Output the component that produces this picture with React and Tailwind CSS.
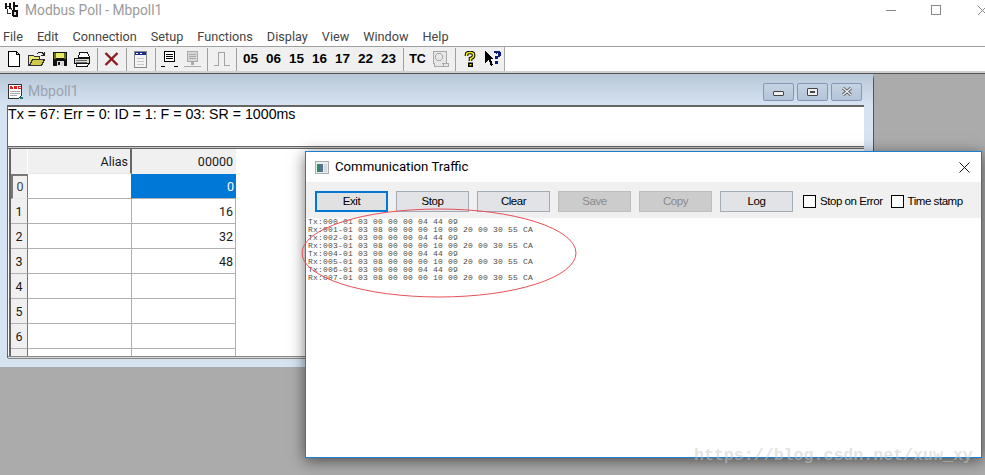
const UI = "font-['Roboto',sans-serif]";
const MENUS = ["File", "Edit", "Connection", "Setup", "Functions", "Display", "View", "Window", "Help"];
const CODES = ["05", "06", "15", "16", "17", "22", "23"];
const REQUEST = "01 03 00 00 00 04 44 09";
const REPLY = "01 03 08 00 00 00 10 00 20 00 30 55 CA";
const LOG = Array.from({ length: 8 }, (_, i) => {
  const seq = String(i).padStart(3, "0");
  return i % 2 === 0 ? `Tx:${seq}-${REQUEST}` : `Rx:${seq}-${REPLY}`;
});
const ROWS = [
  { id: 0, value: "0" },
  { id: 1, value: "16" },
  { id: 2, value: "32" },
  { id: 3, value: "48" },
  { id: 4, value: "" },
  { id: 5, value: "" },
  { id: 6, value: "" },
];

function AppIcon() {
  return (
    <svg width="16" height="16" viewBox="0 0 16 16" shapeRendering="crispEdges">
      <path d="M1 1h2v3h2V1h2v6H5V5H3v2H1z" fill="#111" />
      <path d="M9 0h2v3h3v2h-3v3H9z" fill="#111" />
      <path d="M3 7h1v4h3v1H3zM7 6h1v2H7z" fill="#333" />
      <path d="M8 8h6v6l-1 1H9l-1-1z" fill="#111" />
      <path d="M10 10h2v3h-2z" fill="#ddd" />
    </svg>
  );
}

function NewIcon() {
  return (
    <svg width="14" height="16" viewBox="0 0 14 16" shapeRendering="crispEdges">
      <path d="M1.500.5h8l3 3v12h-11z" fill="#fff" stroke="#000" />
      <path d="M9.500.5v3h3" fill="none" stroke="#000" />
    </svg>
  );
}

function OpenIcon() {
  return (
    <svg width="17" height="14" viewBox="0 0 17 14" shapeRendering="crispEdges">
      <path d="M.5 3.500h5l1 1h5v3h-7l-3 6h-1z" fill="#e9e96a" stroke="#333" />
      <path d="M4.500 7.500h12l-3 6h-12z" fill="#cfc84a" stroke="#333" />
      <path d="M9 2l2-1.500h3l2 2M16 0v3h-3" fill="none" stroke="#222" />
    </svg>
  );
}

function SaveIcon() {
  return (
    <svg width="14" height="14" viewBox="0 0 14 14" shapeRendering="crispEdges">
      <path d="M0 0h14v14H0z" fill="#111" />
      <path d="M3 1h8v5H3z" fill="#e8e86a" />
      <path d="M1 1h2v6h8V1h2v6H1z" fill="#6d6d1c" />
      <path d="M4 9h7v5H4z" fill="#ddd" />
      <path d="M5 10h2v3H5z" fill="#111" />
    </svg>
  );
}

function PrintIcon() {
  return (
    <svg width="17" height="15" viewBox="0 0 17 15" shapeRendering="crispEdges">
      <path d="M5.500.5h8l2 5h-11z" fill="#fff" stroke="#111" />
      <path d="M.5 6.500h15v5h-15z" fill="#d8d8d8" stroke="#111" />
      <path d="M2.500 11.500h12l-1 3h-11z" fill="#fff" stroke="#111" />
      <path d="M2 8h11M2 10h11" stroke="#666" />
      <path d="M14 8h1v1h-1z" fill="#e8e86a" />
    </svg>
  );
}

function CloseRedIcon() {
  return (
    <svg width="15" height="14" viewBox="0 0 15 14">
      <path d="M1.500 1l12 12M13.500 1l-12 12" stroke="#8c1d1d" strokeWidth="2.400" fill="none" />
    </svg>
  );
}

function WindowIcon() {
  return (
    <svg width="13" height="17" viewBox="0 0 13 17" shapeRendering="crispEdges">
      <path d="M.5.5h12v16H.5z" fill="#f4f4f4" stroke="#8a8a8a" />
      <path d="M1 1h11v3H1z" fill="#1c2f8c" />
      <path d="M2 2h2v1H2zM6 2h2v1H6z" fill="#fff" />
      <path d="M3 7h7M3 10h7M3 13h7" stroke="#c8c8c8" />
    </svg>
  );
}

function BusIcon({ muted = false }) {
  const c = muted ? "#a9a9a9" : "#000";
  return (
    <svg width="17" height="17" viewBox="0 0 17 17" shapeRendering="crispEdges">
      <path d="M3.500.5h10v10h-10z" fill={muted ? "#d8d8d8" : "#fff"} stroke={c} />
      <path d="M5 3h7M5 5h7M5 7h7" stroke={c} />
      <path d="M7 11h3v3H7z" fill={muted ? c : "none"} />
      <path d="M0 15.500h4M13 15.500h4" stroke={c} />
      {muted && <path d="M4 15.500h9" stroke={c} />}
    </svg>
  );
}

function PulseIcon() {
  return (
    <svg width="16" height="14" viewBox="0 0 16 14" shapeRendering="crispEdges">
      <path d="M0 13.500h4.500V.5h6v13H16" fill="none" stroke="#a3a3a3" />
    </svg>
  );
}

function ScopeIcon() {
  return (
    <svg width="17" height="16" viewBox="0 0 17 16" shapeRendering="crispEdges">
      <path d="M1.500.5h13v12h-3v3h-9v-3h-1z" fill="#e6e6e6" stroke="#a8a8a8" />
      <circle cx="7" cy="6" r="3.500" fill="none" stroke="#a8a8a8" />
      <path d="M11 12.500h5.500v3h-5z" fill="#e6e6e6" stroke="#a8a8a8" />
    </svg>
  );
}

function QuestionIcon() {
  return (
    <svg width="12" height="16" viewBox="0 0 12 16">
      <path d="M2.500 5V3.500Q2.500 1.500 6 1.500T9.500 3.500V5Q9.500 6.500 6.500 7.500V10" fill="none" stroke="#000" strokeWidth="3.600" />
      <path d="M2.500 5V3.500Q2.500 1.500 6 1.500T9.500 3.500V5Q9.500 6.500 6.500 7.500V10" fill="none" stroke="#f5ef1a" strokeWidth="1.600" />
      <path d="M4 11.500h5v4.500H4z" fill="#000" />
      <path d="M5.500 13h2v1.500h-2z" fill="#f5ef1a" />
    </svg>
  );
}

function HelpArrowIcon() {
  return (
    <svg width="16" height="16" viewBox="0 0 16 16" shapeRendering="crispEdges">
      <path d="M0 0l9 8H6l2 6-2 1-2-6-4 3z" fill="#000" />
      <path d="M9 2V0h6v1h1v4h-1v1h-2v2h-3V5h3V2h-1v1z" fill="#0c1a80" />
      <path d="M10 10h3v3h-3z" fill="#0c1a80" />
    </svg>
  );
}

function DocIcon() {
  return (
    <svg width="16" height="16" viewBox="0 0 16 16" shapeRendering="crispEdges">
      <path d="M.5.5h13v11l-3 3H.5z" fill="#fff" stroke="#333" />
      <path d="M2 2h10v4H2z" fill="#fff" />
      <path d="M2 2h2v1h1v2H2zM6 2h3v3H6zM10 2h3v1h-2v1h2v1h-3z" fill="#d22" />
      <path d="M2 7h10M2 9h10M2 11h7" stroke="#aaa" />
      <path d="M12 13h3v2h-3z" fill="#16807f" />
    </svg>
  );
}

function TrafficIcon() {
  return (
    <svg width="14" height="13" viewBox="0 0 14 13" shapeRendering="crispEdges">
      <path d="M0 0h14v13H0z" fill="#a9adb0" />
      <path d="M1 1h12v11H1z" fill="#e9eef0" />
      <path d="M2 3h3v8H2z" fill="#2f8a63" />
      <path d="M5 3h3v8H5z" fill="#57738f" />
      <path d="M9 3h3v8H9z" fill="#d3dde0" />
    </svg>
  );
}

function ToolSep() {
  return (
    <div className="w-[6px] h-[23px] flex justify-center shrink-0">
      <div className="w-px h-full bg-[#a0a0a0]" />
    </div>
  );
}

function ToolBtn({ children }) {
  return <div className="w-[23px] h-[23px] shrink-0 flex items-center justify-center">{children}</div>;
}

function MdiBtn({ children }) {
  return (
    <div className="w-[31px] h-[18px] rounded-[2px] border border-[#8497b3] bg-gradient-to-b from-[#c6d3e2] to-[#b3c4d8] flex items-center justify-center">
      {children}
    </div>
  );
}

function TrafficBtn({ label, focused = false, disabled = false }) {
  let tone = "border border-[#a3acb5] bg-[#e1e3e6] text-black";
  if (focused) tone = "border-2 border-[#0078d7] bg-[#e1e1e1] text-black";
  if (disabled) tone = "border border-[#bdbdbd] bg-[#cccccc] text-[#8a8a8a]";
  return (
    <div className={`w-[73px] h-[21px] shrink-0 flex items-center justify-center pt-px ${tone}`}>
      {label}
    </div>
  );
}

function ChildWindow() {
  return (
    <div className="absolute left-0 top-0 w-[874px] h-[293px] rounded-tr-[5px] border-r border-[#555] bg-[#d6e4f2] flex flex-col">
      <div className={`h-[31px] shrink-0 flex items-center pt-[4px] pl-[8px] pr-[11px] bg-gradient-to-b from-[#b9c8d8] to-[#d5e3f2] ${UI}`}>
        <DocIcon />
        <span className="ml-[4px] text-[14px] text-[#9aa3ad]">Mbpoll1</span>
        <div className="ml-auto flex gap-[3px]">
          <MdiBtn>
            <div className="w-[11px] h-[5px] mt-[3px] border border-[#444] bg-[#eee] rounded-[1px]" />
          </MdiBtn>
          <MdiBtn>
            <div className="w-[11px] h-[8px] border border-[#444] bg-[#eee] flex items-center justify-center rounded-[1px]">
              <div className="w-[5px] h-[2px] bg-[#444]" />
            </div>
          </MdiBtn>
          <MdiBtn>
            <svg width="12" height="9" viewBox="0 0 12 9">
              <path d="M2 1l8 7M10 1L2 8" stroke="#555" strokeWidth="3" />
              <path d="M2 1l8 7M10 1L2 8" stroke="#eee" strokeWidth="1.400" />
            </svg>
          </MdiBtn>
        </div>
      </div>
      <div className="ml-[7px] mr-[9px] h-[253px] shrink-0 border-t-2 border-l border-[#666] bg-white flex flex-col">
        <div className="h-[39px] shrink-0 text-[14.2px] leading-[14px] text-black font-['Liberation_Sans',sans-serif]">
          Tx = 67: Err = 0: ID = 1: F = 03: SR = 1000ms
        </div>
        <div className="h-[3px] shrink-0 border-y border-[#666] bg-[#c8c8c8]" />
        <Grid />
        <div className="h-[3px] mt-auto shrink-0 border-y border-[#888] bg-[#d8d8d8]" />
      </div>
    </div>
  );
}

function Grid() {
  return (
    <div className={`ml-px w-[227px] h-[207px] shrink-0 border-l-2 border-[#666] overflow-hidden text-[12.5px] leading-[26px] text-[#1a1a1a] ${UI}`}>
      <div className="flex h-[25px]">
        <div className="w-[17px] shrink-0 bg-[#f0f0f0] border-r border-white" />
        <div className="w-[104px] shrink-0 bg-[#f0f0f0] border-r-2 border-[#666] border-b border-b-[#e8e8e8] text-right pr-[2px]">Alias</div>
        <div className="w-[104px] shrink-0 bg-[#f0f0f0] text-right pr-[3px]">00000</div>
      </div>
      {ROWS.map((row) => (
        <div key={row.id} className="flex h-[25px]">
          <div className={`w-[17px] shrink-0 bg-[#f0f0f0] border-r border-[#777] border-b text-center ${row.id === 0 ? "border-b-[#e8e8e8] border-l-2 border-l-[#777] border-t-2 border-t-[#777] leading-[22px] text-[#444]" : "border-b-[#b0b0b0]"}`}>
            {row.id}
          </div>
          <div className={`w-[104px] shrink-0 border-r border-b border-[#b0b0b0] ${row.id === 0 ? "bg-white border-r-[#0078d7]" : ""}`} />
          <div className={`w-[104px] shrink-0 text-right pr-[2px] ${row.id === 0 ? "bg-[#0078d7] text-white border-b border-[#b0b0b0]" : "border-r border-b border-[#b0b0b0]"}`}>
            {row.value}
          </div>
        </div>
      ))}
      <div className="flex h-[7px]">
        <div className="w-[17px] shrink-0 bg-[#f0f0f0] border-r border-[#777]" />
        <div className="w-[104px] shrink-0 border-r border-[#b0b0b0]" />
        <div className="w-[104px] shrink-0 border-r border-[#b0b0b0]" />
      </div>
    </div>
  );
}

function TrafficDialog() {
  return (
    <div className="absolute left-[305px] top-[77px] w-[677px] h-[307px] border border-[#1a7fd0] bg-white shadow-[0_3px_14px_rgba(0,0,0,0.55)] flex flex-col">
      <div className={`h-[30px] shrink-0 flex items-center pl-[9px] pr-[11px] ${UI}`}>
        <TrafficIcon />
        <span className="ml-[6px] text-[13.2px] text-black">Communication Traffic</span>
        <svg className="ml-auto" width="11" height="11" viewBox="0 0 11 11">
          <path d="M.5.5l10 10M10.500.5l-10 10" stroke="#111" fill="none" />
        </svg>
      </div>
      <div className="h-[36px] shrink-0 bg-[#f0f0f0] flex items-center gap-[8px] pl-[9px] pt-[3px] text-[11.5px] tracking-[-0.45px] font-['Liberation_Sans',sans-serif]">
        <TrafficBtn label="Exit" focused />
        <TrafficBtn label="Stop" />
        <TrafficBtn label="Clear" />
        <TrafficBtn label="Save" disabled />
        <TrafficBtn label="Copy" disabled />
        <TrafficBtn label="Log" />
        <div className="ml-[2px] flex items-center gap-[4px]">
          <div className="w-[13px] h-[13px] border border-black bg-white" />
          <span>Stop on Error</span>
        </div>
        <div className="flex items-center gap-[4px]">
          <div className="w-[13px] h-[13px] border border-black bg-white" />
          <span>Time stamp</span>
        </div>
      </div>
      <div className="pl-[2px] text-[8px] tracking-[0.2px] leading-[8px] text-[#4f4d42] font-['Liberation_Mono',monospace]">
        {LOG.map((line) => (
          <div key={line} className="whitespace-pre">{line}</div>
        ))}
      </div>
      <svg className="absolute left-[-5px] top-[55px] overflow-visible" width="280" height="92" viewBox="0 0 280 92">
        <ellipse cx="138" cy="46" rx="137" ry="44" fill="none" stroke="#e8505a" strokeWidth="1" />
      </svg>
    </div>
  );
}

export default function App() {
  return (
    <div className="relative w-[985px] h-[475px] overflow-hidden bg-white flex flex-col">
      <div className={`h-[27px] shrink-0 flex items-center pl-[4px] pb-[7px] ${UI}`}>
        <AppIcon />
        <span className="ml-[5px] text-[13.8px] text-[#9a9a9a]">Modbus Poll - Mbpoll1</span>
        <div className="ml-auto flex items-center">
          <div className="w-[10px] h-px bg-[#888] mr-[35px]" />
          <div className="w-[10px] h-[10px] border border-[#888] mr-[36px]" />
          <svg width="8" height="10" viewBox="0 0 8 10">
            <path d="M.5.5l10 10M.5 10.500l10-10" stroke="#888" fill="none" />
          </svg>
        </div>
      </div>
      <div className={`h-[20px] shrink-0 flex items-center gap-[14px] pl-[3px] border-b border-[#a0a0a0] text-[12.7px] text-[#444] ${UI}`}>
        {MENUS.map((m) => (
          <span key={m}>{m}</span>
        ))}
      </div>
      <div className="h-[24px] shrink-0 flex bg-white">
        <div className="w-[505px] flex items-center pl-[2px] bg-[#f0f0f0] border-r border-[#a8a8a8] text-[13.5px] font-bold text-black font-['Liberation_Sans',sans-serif]">
          <ToolBtn><NewIcon /></ToolBtn>
          <ToolBtn><OpenIcon /></ToolBtn>
          <ToolBtn><SaveIcon /></ToolBtn>
          <ToolBtn><PrintIcon /></ToolBtn>
          <ToolSep />
          <ToolBtn><CloseRedIcon /></ToolBtn>
          <ToolSep />
          <ToolBtn><WindowIcon /></ToolBtn>
          <ToolSep />
          <ToolBtn><BusIcon /></ToolBtn>
          <ToolBtn><BusIcon muted /></ToolBtn>
          <ToolSep />
          <ToolBtn><PulseIcon /></ToolBtn>
          <ToolSep />
          {CODES.map((c) => (
            <ToolBtn key={c}>{c}</ToolBtn>
          ))}
          <ToolSep />
          <ToolBtn><span className="text-[12.5px]">TC</span></ToolBtn>
          <ToolBtn><ScopeIcon /></ToolBtn>
          <ToolSep />
          <ToolBtn><QuestionIcon /></ToolBtn>
          <ToolBtn><HelpArrowIcon /></ToolBtn>
        </div>
      </div>
      <div className="h-[2px] shrink-0 bg-[#d0d0d0]" />
      <div className="h-px shrink-0 bg-[#555]" />
      <div className="relative flex-1 bg-[#ababab]">
        <ChildWindow />
        <TrafficDialog />
      </div>
      <div className="absolute left-[694px] top-[447px] text-[16.6px] leading-[18px] font-bold text-[#c8c8c8]/50 font-['Liberation_Mono',monospace]">
        https://blog.csdn.net/xuw_xy
      </div>
    </div>
  );
}
